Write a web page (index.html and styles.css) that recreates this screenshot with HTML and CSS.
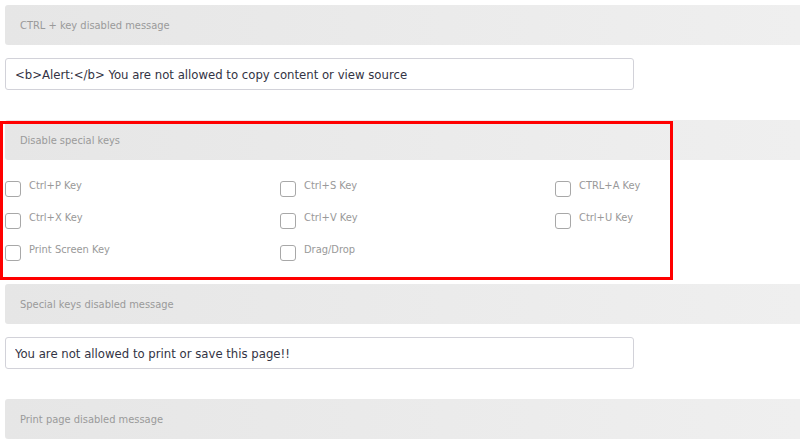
FILE: index.html
```html
<!DOCTYPE html>
<html>
<head>
<meta charset="utf-8">
<link rel="stylesheet" href="styles.css">
</head>
<body>
<div class="page">
  <div class="section-head">CTRL + key disabled message</div>
  <input class="text-input" type="text" value="<b>Alert:</b> You are not allowed to copy content or view source">

  <div class="highlight-wrap">
    <div class="section-head head-keys">Disable special keys</div>
    <div class="key-grid">
      <label class="key"><span class="box"></span><span class="key-label">Ctrl+P Key</span></label>
      <label class="key"><span class="box"></span><span class="key-label">Ctrl+S Key</span></label>
      <label class="key"><span class="box"></span><span class="key-label">CTRL+A Key</span></label>
      <label class="key"><span class="box"></span><span class="key-label">Ctrl+X Key</span></label>
      <label class="key"><span class="box"></span><span class="key-label">Ctrl+V Key</span></label>
      <label class="key"><span class="box"></span><span class="key-label">Ctrl+U Key</span></label>
      <label class="key"><span class="box"></span><span class="key-label">Print Screen Key</span></label>
      <label class="key"><span class="box"></span><span class="key-label">Drag/Drop</span></label>
    </div>
    <div class="highlight"></div>
  </div>

  <div class="section-head">Special keys disabled message</div>
  <input class="text-input" type="text" value="You are not allowed to print or save this page!!">

  <div class="section-head">Print page disabled message</div>
</div>
</body>
</html>
```
FILE: styles.css
```css
html, body {
  margin: 0;
  padding: 0;
  background: #fff;
  overflow: hidden;
}
.page {
  padding: 5px 0 0 5px;
  font-family: "DejaVu Sans Condensed", "DejaVu Sans", sans-serif;
}
.section-head {
  height: 40px;
  box-sizing: border-box;
  padding-left: 15px;
  display: flex;
  align-items: center;
  background: linear-gradient(to right, #e6e6e6, #efefef);
  border-radius: 3px 0 0 3px;
  color: #9a9a9a;
  font-size: 11px;
}
.text-input {
  display: block;
  box-sizing: border-box;
  width: 629px;
  height: 32px;
  margin: 13px 0 30px 0;
  padding: 0 9px;
  border: 1px solid #d2d2d9;
  border-radius: 3px;
  font-family: "DejaVu Sans Condensed", "DejaVu Sans", sans-serif;
  font-size: 13px;
  color: #333344;
  background: #fff;
  outline: none;
}
.highlight-wrap {
  position: relative;
}
.key-grid {
  display: grid;
  grid-template-columns: 275px 275px 275px;
  grid-auto-rows: 32px;
  padding: 21px 0 7px 0;
}
.key {
  display: flex;
  align-items: flex-start;
  gap: 8px;
}
.box {
  width: 16px;
  height: 16px;
  box-sizing: border-box;
  border: 1px solid #a8a8a8;
  border-radius: 3px;
  background: #fff;
}
.key-label {
  color: #999;
  font-size: 11px;
  line-height: 13px;
  margin-top: -2px;
}
.highlight {
  position: absolute;
  left: -5px;
  top: 1px;
  width: 673px;
  height: 159px;
  box-sizing: border-box;
  border: 3px solid #ff0000;
  pointer-events: none;
}
```
